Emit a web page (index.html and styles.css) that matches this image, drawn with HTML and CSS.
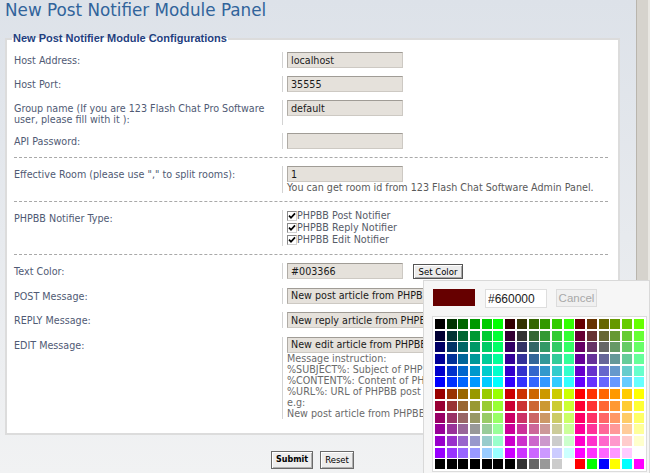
FILE: index.html
```html
<!DOCTYPE html>
<html lang="en">
<head>
<meta charset="utf-8">
<title>New Post Notifier Module Panel</title>
<link rel="stylesheet" href="styles.css">
</head>
<body>
<div class="frame">
  <main class="page">
    <h1 class="title">New Post Notifier Module Panel</h1>
    <form class="form">
      <fieldset class="config">
        <legend class="legend">New Post Notifier Module Configurations</legend>

        <div class="section section-first">
          <div class="label">Host Address:</div>
          <div class="value"><input class="field" type="text" value="localhost"></div>

          <div class="label">Host Port:</div>
          <div class="value"><input class="field" type="text" value="35555"></div>

          <div class="label">Group name (If you are 123 Flash Chat Pro Software user, please fill with it ):</div>
          <div class="value"><input class="field" type="text" value="default"></div>

          <div class="label">API Password:</div>
          <div class="value"><input class="field" type="password" value=""></div>
        </div>

        <div class="section">
          <div class="label">Effective Room (please use "," to split rooms):</div>
          <div class="value">
            <input class="field" type="text" value="1">
            <div class="hint">You can get room id from 123 Flash Chat Software Admin Panel.</div>
          </div>
        </div>

        <div class="section">
          <div class="label">PHPBB Notifier Type:</div>
          <div class="value checks">
            <div class="check-line"><span class="check"><svg viewBox="0 0 10 10" width="10" height="10"><path d="M2 4.6 L4 6.8 L8 2.4" fill="none" stroke="#000" stroke-width="1.7"/></svg></span>PHPBB Post Notifier</div>
            <div class="check-line"><span class="check"><svg viewBox="0 0 10 10" width="10" height="10"><path d="M2 4.6 L4 6.8 L8 2.4" fill="none" stroke="#000" stroke-width="1.7"/></svg></span>PHPBB Reply Notifier</div>
            <div class="check-line"><span class="check"><svg viewBox="0 0 10 10" width="10" height="10"><path d="M2 4.6 L4 6.8 L8 2.4" fill="none" stroke="#000" stroke-width="1.7"/></svg></span>PHPBB Edit Notifier</div>
          </div>
        </div>

        <div class="section section-last">
          <div class="label">Text Color:</div>
          <div class="value value-inline">
            <input class="field" type="text" value="#003366">
            <button type="button" class="btn-small">Set Color</button>
          </div>

          <div class="label">POST Message:</div>
          <div class="value"><input class="field field-wide" type="text" value="New post article from PHPBB: %SUBJECT%"></div>

          <div class="label">REPLY Message:</div>
          <div class="value"><input class="field field-wide" type="text" value="New reply article from PHPBB: %SUBJECT%"></div>

          <div class="label">EDIT Message:</div>
          <div class="value">
            <input class="field field-wide" type="text" value="New edit article from PHPBB: %SUBJECT%">
            <div class="hint hint-light">Message instruction:<br>%SUBJECT%: Subject of PHPBB post<br>%CONTENT%: Content of PHPBB post<br>%URL%: URL of PHPBB post<br>e.g:<br>New post article from PHPBB: %SUBJECT%</div>
          </div>
        </div>
      </fieldset>

      <div class="actions">
        <button type="button" class="btn btn-primary">Submit</button>
        <button type="button" class="btn">Reset</button>
      </div>
    </form>
  </main>
  <div class="edge"></div>
</div>

<div class="picker">
  <div class="picker-head">
    <span class="swatch"></span>
    <input class="hex" type="text" value="#660000">
    <button type="button" class="cancel" disabled>Cancel</button>
  </div>
  <div class="palette" id="palette"></div>
</div>

<script src="script.js"></script>
</body>
</html>
```

FILE: styles.css
```css
html, body {
  margin: 0;
  height: 100%;
  overflow: hidden;
}

body {
  font-family: "DejaVu Sans", Verdana, sans-serif;
  font-size: 9.6px;
  position: relative;
}

.frame {
  display: flex;
  height: 100%;
}

.page {
  flex: 1;
  background: linear-gradient(#dde2e9, #f1f2f3);
}

.edge {
  width: 11px;
  background: #d6d3cd;
  border-left: 1px solid #b9b5ad;
  border-right: 2px solid #e9e7e2;
}

.title {
  margin: 0;
  padding-left: 5px;
  font: normal 16.8px/20px "DejaVu Sans", Verdana, sans-serif;
  color: #31649b;
}

.form {
  margin-top: 13px;
}

.config {
  margin: 0 16px 0 5px;
  padding: 8px 10px 6px 7px;
  border: 2px solid #dcdcdc;
  background: #fff;
  min-width: 0;
}

.legend {
  font: bold 11px/11px "Liberation Sans", Arial, sans-serif;
  color: #1f3f7f;
  padding: 0 1px;
  margin-left: -2px;
}

.section {
  display: grid;
  grid-template-columns: 268px 1fr;
  row-gap: 8px;
  padding: 8px 0;
  border-bottom: 1px dashed #a9a9a9;
}

.section-first {
  padding-top: 0;
}

.section-last {
  border-bottom: none;
  row-gap: 8.5px;
}

.label {
  padding-top: 3px;
  line-height: 11px;
  color: #505a74;
}

.value {
  border-left: 1px solid #d3d3d3;
  padding-left: 4px;
  display: flex;
  flex-direction: column;
  align-items: flex-start;
  min-width: 0;
}

.value-inline {
  flex-direction: row;
  gap: 10px;
}

.field {
  width: 116px;
  height: 16px;
  box-sizing: border-box;
  margin: 0;
  padding: 0 3px;
  border: 1px solid #cdc9c3;
  border-top-color: #a09c96;
  border-left-color: #b0aca6;
  background: #e5e1db;
  font: 9.6px "DejaVu Sans", Verdana, sans-serif;
  color: #1a1a1a;
  outline: none;
}

.field-wide {
  width: 300px;
}

.hint {
  line-height: 11px;
  color: #5a5a5a;
  white-space: nowrap;
}

.hint-light {
  color: #6a6a6a;
}

.checks {
  line-height: 12px;
}

.check-line {
  display: flex;
  align-items: center;
  height: 12px;
  color: #575c68;
}

.check {
  width: 10px;
  height: 10px;
  box-sizing: border-box;
  border: 1px solid #8a8a8a;
  border-right-color: #d0d0d0;
  border-bottom-color: #d0d0d0;
  background: #fff;
  display: flex;
  align-items: center;
  justify-content: center;
  overflow: hidden;
}

.check svg {
  display: block;
  flex: none;
}

.btn-small {
  margin-top: 1px;
  width: 50px;
  height: 15px;
  padding: 0;
  font: 8.5px "DejaVu Sans", Verdana, sans-serif;
  color: #000;
  border: 1px solid #555;
  background: #ececec;
  box-shadow: inset 1px 1px #fff, inset -1px -1px #a8a8a8;
}

.actions {
  display: flex;
  justify-content: center;
  gap: 7px;
  margin: 16px 16px 0 5px;
}

.btn {
  height: 18px;
  padding: 0 4px;
  font: 8.5px "DejaVu Sans", Verdana, sans-serif;
  color: #000;
  border: 1px solid #6a6a6a;
  background: #ededed;
  box-shadow: inset 1px 1px #fff, inset -1px -1px #b0b0b0;
}

.btn-primary {
  font-weight: bold;
  font-size: 8px;
}

.picker {
  position: absolute;
  left: 423px;
  top: 280px;
  width: 227px;
  height: 200px;
  box-sizing: border-box;
  padding: 8px 0 0 9px;
  background: #f6f6f6;
  border: 1px solid #d9d9d9;
  font-family: "Liberation Sans", Arial, sans-serif;
}

.picker-head {
  display: flex;
  align-items: flex-start;
  height: 19px;
}

.swatch {
  width: 42px;
  height: 17px;
  background: #660000;
}

.hex {
  margin: 0 0 0 10px;
  width: 62px;
  height: 19px;
  box-sizing: border-box;
  padding: 0 2px;
  border: 1px solid #dedede;
  background: #fff;
  font: 12px "Liberation Sans", Arial, sans-serif;
  color: #222;
  outline: none;
}

.cancel {
  margin-left: 9px;
  width: 41px;
  height: 18px;
  padding: 0;
  border: 1px solid #dcdcdc;
  background: #f0f0f0;
  color: #a8a8a8;
  font: 11.5px "Liberation Sans", Arial, sans-serif;
}

.palette {
  margin: 8px 0 0 -1px;
  display: grid;
  grid-template-columns: repeat(18, 10px);
  grid-auto-rows: 10px;
  gap: 1.7px;
  padding: 2px;
  border: 1px solid #dcdcdc;
  background: #fff;
  width: max-content;
}

.cell {
  display: block;
}
```

FILE: script.js
```js
(function () {
  var el = document.getElementById('palette');
  var h = ['00', '33', '66', '99', 'CC', 'FF'];
  var colors = [];
  for (var r = 0; r < 12; r++) {
    for (var c = 0; c < 18; c++) {
      var R = h[Math.floor(c / 6) + (r >= 6 ? 3 : 0)];
      var G = h[c % 6];
      var B = h[r % 6];
      colors.push('#' + R + G + B);
    }
  }
  colors.push('#000000', '#000000', '#000000', '#000000', '#000000', '#000000', '#000000',
    '#333333', '#666666', '#999999', '#CCCCCC', '#FFFFFF',
    '#FF0000', '#00FF00', '#0000FF', '#FFFF00', '#00FFFF', '#FF00FF');
  colors.forEach(function (col) {
    var s = document.createElement('span');
    s.className = 'cell';
    s.style.background = col;
    el.appendChild(s);
  });
})();
```
